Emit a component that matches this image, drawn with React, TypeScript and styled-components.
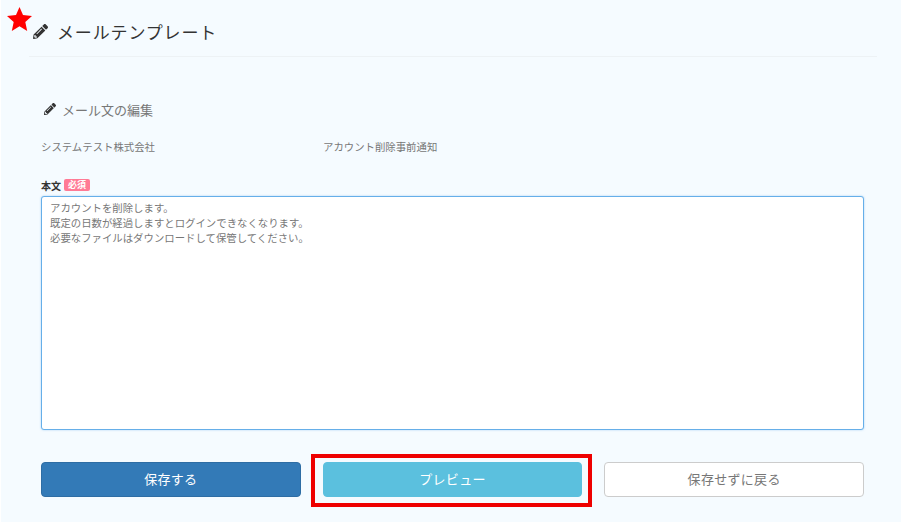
import React from 'react';
import styled, { createGlobalStyle } from 'styled-components';
import { FaPencilAlt } from 'react-icons/fa';

const GlobalStyle = createGlobalStyle`
  html, body {
    margin: 0;
    padding: 0;
    background: #ffffff;
    font-family: "Noto Sans CJK JP", "Liberation Sans", sans-serif;
  }
`;

const Page = styled.div`
  position: relative;
  box-sizing: border-box;
  width: 900px;
  height: 522px;
  margin-left: 1px;
  background: #f5fbff;
`;

const Star = styled.svg`
  position: absolute;
  left: 6px;
  top: 7px;
  width: 25px;
  height: 24px;
`;

const Header = styled.header`
  display: flex;
  align-items: center;
  gap: 9px;
  box-sizing: border-box;
  height: 57px;
  margin: 0 24px 0 28px;
  padding: 7px 0 0 4px;
  border-bottom: 1px solid #edf2f5;
`;

const Title = styled.h1`
  margin: 0;
  font-size: 17px;
  font-weight: 400;
  letter-spacing: 0.85px;
  color: #333333;
`;

const Body = styled.main`
  display: flex;
  flex-direction: column;
  padding: 43px 37px 0 40px;
`;

const SectionTitle = styled.h2`
  display: flex;
  align-items: center;
  gap: 6px;
  margin: 0 0 0 3px;
  height: 18px;
  font-size: 13px;
  font-weight: 400;
  color: #777777;
`;

const MetaRow = styled.div`
  display: flex;
  margin-top: 20px;
  height: 16px;
  align-items: center;
  font-size: 10.4px;
  color: #777777;
`;

const MetaCell = styled.span`
  width: 282px;
`;

const FieldLabel = styled.div`
  display: flex;
  align-items: center;
  gap: 3px;
  margin-top: 23px;
  height: 16px;
  font-size: 10px;
  font-weight: 700;
  color: #333333;
`;

const Badge = styled.span`
  display: inline-block;
  width: 26px;
  height: 12px;
  line-height: 12px;
  border-radius: 2px;
  background: #ff7a95;
  color: #ffffff;
  font-size: 9px;
  font-weight: 700;
  text-align: center;
`;

const BodyText = styled.textarea`
  box-sizing: border-box;
  display: block;
  width: 823px;
  height: 234px;
  margin-top: 3px;
  padding: 3px 8px;
  resize: none;
  outline: none;
  border: 1px solid #66afe9;
  border-radius: 3px;
  background: #ffffff;
  box-shadow: 0 0 2px rgba(102, 175, 233, 0.6);
  font-family: inherit;
  font-size: 10.4px;
  line-height: 15px;
  color: #777777;
`;

const Actions = styled.div`
  display: grid;
  grid-template-columns: repeat(3, 1fr);
  gap: 22px;
  width: 823px;
  margin-top: 32px;
`;

const ActionSlot = styled.div`
  position: relative;
`;

const variants = {
  primary: 'background:#337ab7;border-color:#2e6da4;color:#ffffff;',
  info: 'background:#5bc0de;border-color:#5bc0de;color:#ffffff;',
  plain: 'background:#ffffff;border-color:#cccccc;color:#777777;',
};

const ActionButton = styled.button<{ $variant: keyof typeof variants }>`
  display: block;
  box-sizing: border-box;
  width: 100%;
  height: 35px;
  padding: 0 0 2px;
  border: 1px solid;
  border-radius: 4px;
  font-family: inherit;
  font-size: 13px;
  letter-spacing: 0.3px;
  ${(p) => variants[p.$variant]}
`;

const Highlight = styled.div`
  position: absolute;
  left: -12px;
  right: -10px;
  top: -8px;
  bottom: -10px;
  border: 4px solid #ee0000;
  pointer-events: none;
`;

const App = () => {
  return (
    <>
      <GlobalStyle />
      <Page>
        <Star viewBox="0 0 25 24">
          <polygon
            fill="#ff0000"
            points="12.5,0 16,8 25,8.9 18.3,14.9 20.2,24 12.5,19.3 4.8,24 6.7,14.9 0,8.9 9,8"
          />
        </Star>
        <Header>
          <FaPencilAlt size={15} color="#333333" />
          <Title>メールテンプレート</Title>
        </Header>
        <Body>
          <SectionTitle>
            <FaPencilAlt size={12} color="#333333" />
            メール文の編集
          </SectionTitle>
          <MetaRow>
            <MetaCell>システムテスト株式会社</MetaCell>
            <MetaCell>アカウント削除事前通知</MetaCell>
          </MetaRow>
          <FieldLabel>
            本文
            <Badge>必須</Badge>
          </FieldLabel>
          <BodyText
            readOnly
            defaultValue={
              'アカウントを削除します。\n既定の日数が経過しますとログインできなくなります。\n必要なファイルはダウンロードして保管してください。'
            }
          />
          <Actions>
            <ActionSlot>
              <ActionButton $variant="primary">保存する</ActionButton>
            </ActionSlot>
            <ActionSlot>
              <ActionButton $variant="info">プレビュー</ActionButton>
              <Highlight />
            </ActionSlot>
            <ActionSlot>
              <ActionButton $variant="plain">保存せずに戻る</ActionButton>
            </ActionSlot>
          </Actions>
        </Body>
      </Page>
    </>
  );
};

export default App;
